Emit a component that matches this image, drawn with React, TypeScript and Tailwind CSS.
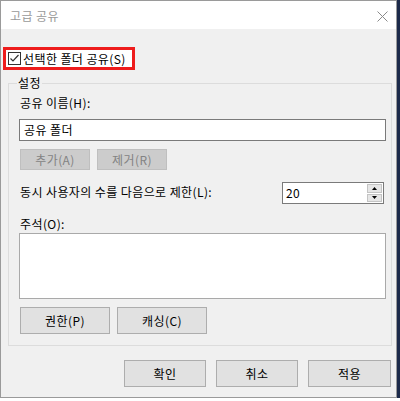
import React from "react";

const font = { fontFamily: '"Noto Sans CJK KR", "Noto Sans", sans-serif' };

function Btn({ children, w, disabled }: { children: React.ReactNode; w: string; disabled?: boolean }) {
  return (
    <div
      className={
        disabled
          ? `${w} h-[21px] flex items-center justify-center border border-[#bfbfbf] bg-[#cccccc] text-[#838383]`
          : `${w} h-[27px] flex items-center justify-center border border-[#adadad] bg-[#e1e1e1] text-[#000]`
      }
    >
      {children}
    </div>
  );
}

export default function App() {
  return (
    <div className="w-[400px] h-[401px] bg-white flex flex-col text-[12px] leading-[16px] tracking-[0.4px] text-black overflow-hidden" style={font}>
      <div className="flex h-[398px]">
        <div className="w-[397px] h-[398px] flex flex-col border border-[#9a9a9a] bg-[#f0f0f0]">
          {/* title bar */}
          <div className="h-[28px] bg-white flex items-center justify-between pl-[9px] pr-[8px]">
            <span className="text-[#999999] mt-[1px]">고급 공유</span>
            <svg width="11" height="11" viewBox="0 0 11 11" className="mt-[2px]">
              <path d="M0.5 0.5 L10.5 10.5 M10.5 0.5 L0.5 10.5" stroke="#8a8a8a" strokeWidth="1" fill="none" />
            </svg>
          </div>

          {/* highlighted checkbox */}
          <div className="mt-[18px] ml-[2px] w-[132px] h-[23px] border-[3px] border-[#ee1c1c] bg-white flex items-center">
            <svg width="13" height="13" viewBox="0 0 13 13" className="ml-[2px]">
              <rect x="0.5" y="0.5" width="12" height="12" fill="#fff" stroke="#333" />
              <path d="M2.5 6.5 L5 9 L10.5 3" stroke="#333" strokeWidth="1.2" fill="none" />
            </svg>
            <span className="ml-[2px]">선택한 폴더 공유(S)</span>
          </div>

          {/* group box */}
          <fieldset className="mt-[5px] ml-[7px] w-[384px] border border-[#dcdcdc] px-0 pb-[11px] pt-[4px]">
            <legend className="ml-[8px] px-[1px] leading-[16px]">설정</legend>
            <div className="flex flex-col pl-[10px] pr-[5px]">
              <div className="ml-[1px] h-[16px]">공유 이름(H):</div>
              <div className="mt-[8px] h-[22px] border border-[#7a7a7a] bg-white flex items-center pl-[4px]">공유 폴더</div>
              <div className="mt-[8px] ml-[1px] flex gap-[7px]">
                <Btn w="w-[70px]" disabled>추가(A)</Btn>
                <Btn w="w-[70px]" disabled>제거(R)</Btn>
              </div>
              <div className="mt-[12px] flex items-center">
                <span className="ml-[1px] -mt-[2px]">동시 사용자의 수를 다음으로 제한(L):</span>
                <div className="ml-auto mr-[2px] w-[102px] h-[22px] border border-[#7a7a7a] bg-white flex">
                  <div className="flex-1 flex items-center pl-[3px]">20</div>
                  <div className="w-[16px] flex flex-col gap-[1px] py-[1px] pr-[1px]">
                    <div className="flex-1 border border-[#c4c4c4] bg-[#e6e6e6] flex items-center justify-center">
                      <svg width="5" height="3" viewBox="0 0 5 3"><path d="M0 3 L2.5 0 L5 3 Z" fill="#000" /></svg>
                    </div>
                    <div className="flex-1 border border-[#c4c4c4] bg-[#e6e6e6] flex items-center justify-center">
                      <svg width="5" height="3" viewBox="0 0 5 3"><path d="M0 0 L2.5 3 L5 0 Z" fill="#000" /></svg>
                    </div>
                  </div>
                </div>
              </div>
              <div className="mt-[12px] ml-[1px] h-[16px]">주석(O):</div>
              <div className="mt-[1px] h-[66px] border border-[#a9a9a9] bg-white"></div>
              <div className="mt-[8px] ml-[1px] flex gap-[7px]">
                <Btn w="w-[90px]">권한(P)</Btn>
                <Btn w="w-[90px]">캐싱(C)</Btn>
              </div>
            </div>
          </fieldset>

          {/* dialog buttons */}
          <div className="mt-[14px] flex justify-end gap-[10px] pr-[5px]">
            <Btn w="w-[82px]">확인</Btn>
            <Btn w="w-[82px]">취소</Btn>
            <Btn w="w-[83px]">적용</Btn>
          </div>
        </div>
        <div className="w-[3px] h-full bg-[#1c2a4a]"></div>
      </div>
      <div className="h-[3px] bg-white"></div>
    </div>
  );
}
